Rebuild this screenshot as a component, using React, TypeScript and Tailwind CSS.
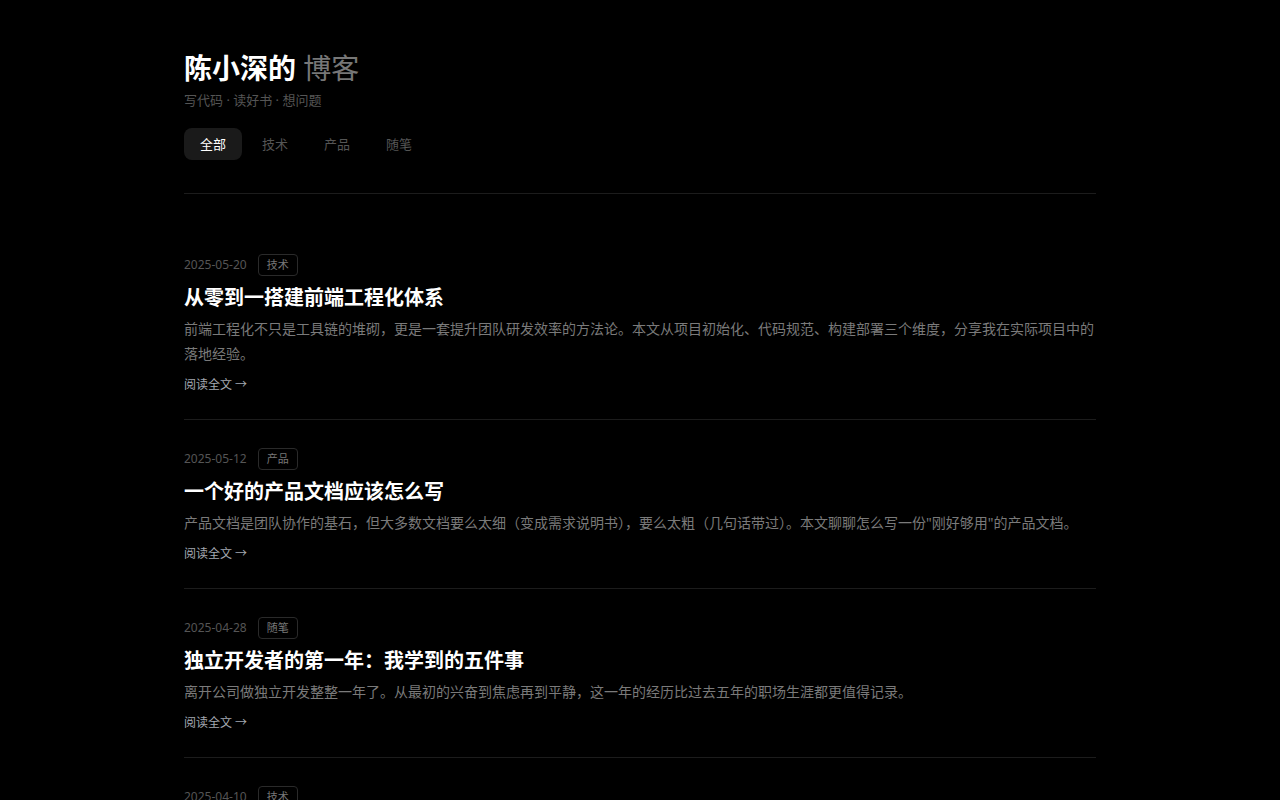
import { useState } from "react";

type Post = {
  id: number;
  date: string;
  tag: string;
  title: string;
  excerpt: string;
};

const tabs = ["全部", "技术", "产品", "随笔"];

const posts: Post[] = [
  {
    id: 1,
    date: "2025-05-20",
    tag: "技术",
    title: "从零到一搭建前端工程化体系",
    excerpt:
      "前端工程化不只是工具链的堆砌，更是一套提升团队研发效率的方法论。本文从项目初始化、代码规范、构建部署三个维度，分享我在实际项目中的落地经验。",
  },
  {
    id: 2,
    date: "2025-05-12",
    tag: "产品",
    title: "一个好的产品文档应该怎么写",
    excerpt:
      "产品文档是团队协作的基石，但大多数文档要么太细（变成需求说明书），要么太粗（几句话带过）。本文聊聊怎么写一份\"刚好够用\"的产品文档。",
  },
  {
    id: 3,
    date: "2025-04-28",
    tag: "随笔",
    title: "独立开发者的第一年：我学到的五件事",
    excerpt:
      "离开公司做独立开发整整一年了。从最初的兴奋到焦虑再到平静，这一年的经历比过去五年的职场生涯都更值得记录。",
  },
  {
    id: 4,
    date: "2025-04-10",
    tag: "技术",
    title: "为什么我又回到了 Vim",
    excerpt:
      "用了三年 VS Code 之后，我重新拿起了 Vim。这不是怀旧，而是在键盘驱动的工作流里找回了专注。",
  },
];

function PostItem({ post }: { post: Post }) {
  return (
    <article className="border-b border-[#1c1c1c] pt-7 pb-6">
      <div className="flex items-center gap-[11px]">
        <span className="text-xs text-[#555]">{post.date}</span>
        <span className="rounded border border-[#2a2a2a] px-2 py-0.5 text-[11px] leading-4 text-[#777]">
          {post.tag}
        </span>
      </div>
      <h2 className="mt-2 text-xl font-bold leading-7 text-white">{post.title}</h2>
      <p className="mt-1 text-sm leading-[25px] text-[#7a7a7a]">{post.excerpt}</p>
      <a href="#" className="mt-2.5 inline-block text-xs leading-[18px] text-[#a3a8b0]">
        阅读全文 →
      </a>
    </article>
  );
}

export default function App() {
  const [active, setActive] = useState("全部");

  return (
    <div
      className="min-h-screen bg-black"
      style={{ fontFamily: '"Noto Sans", "Noto Sans CJK SC", sans-serif' }}
    >
      <div className="mx-auto max-w-[960px] px-6">
        {/* Header */}
        <header className="border-b border-[#1c1c1c] pt-12 pb-[33px]">
          <h1 className="text-[28px] leading-10 font-bold text-white">
            陈小深的 <span className="font-normal text-[#777]">博客</span>
          </h1>
          <p className="mt-0.5 text-[13px] leading-5 text-[#555]">写代码 · 读好书 · 想问题</p>

          <nav className="mt-[18px] flex gap-1">
            {tabs.map((t) => (
              <button
                key={t}
                onClick={() => setActive(t)}
                className={`h-8 rounded-lg px-4 pt-0.5 text-[13px] ${
                  active === t ? "bg-[#1a1a1a] text-white" : "text-[#555]"
                }`}
              >
                {t}
              </button>
            ))}
          </nav>
        </header>

        {/* Post list */}
        <main className="pt-8">
          {posts.map((p) => (
            <PostItem key={p.id} post={p} />
          ))}
        </main>
      </div>
    </div>
  );
}
